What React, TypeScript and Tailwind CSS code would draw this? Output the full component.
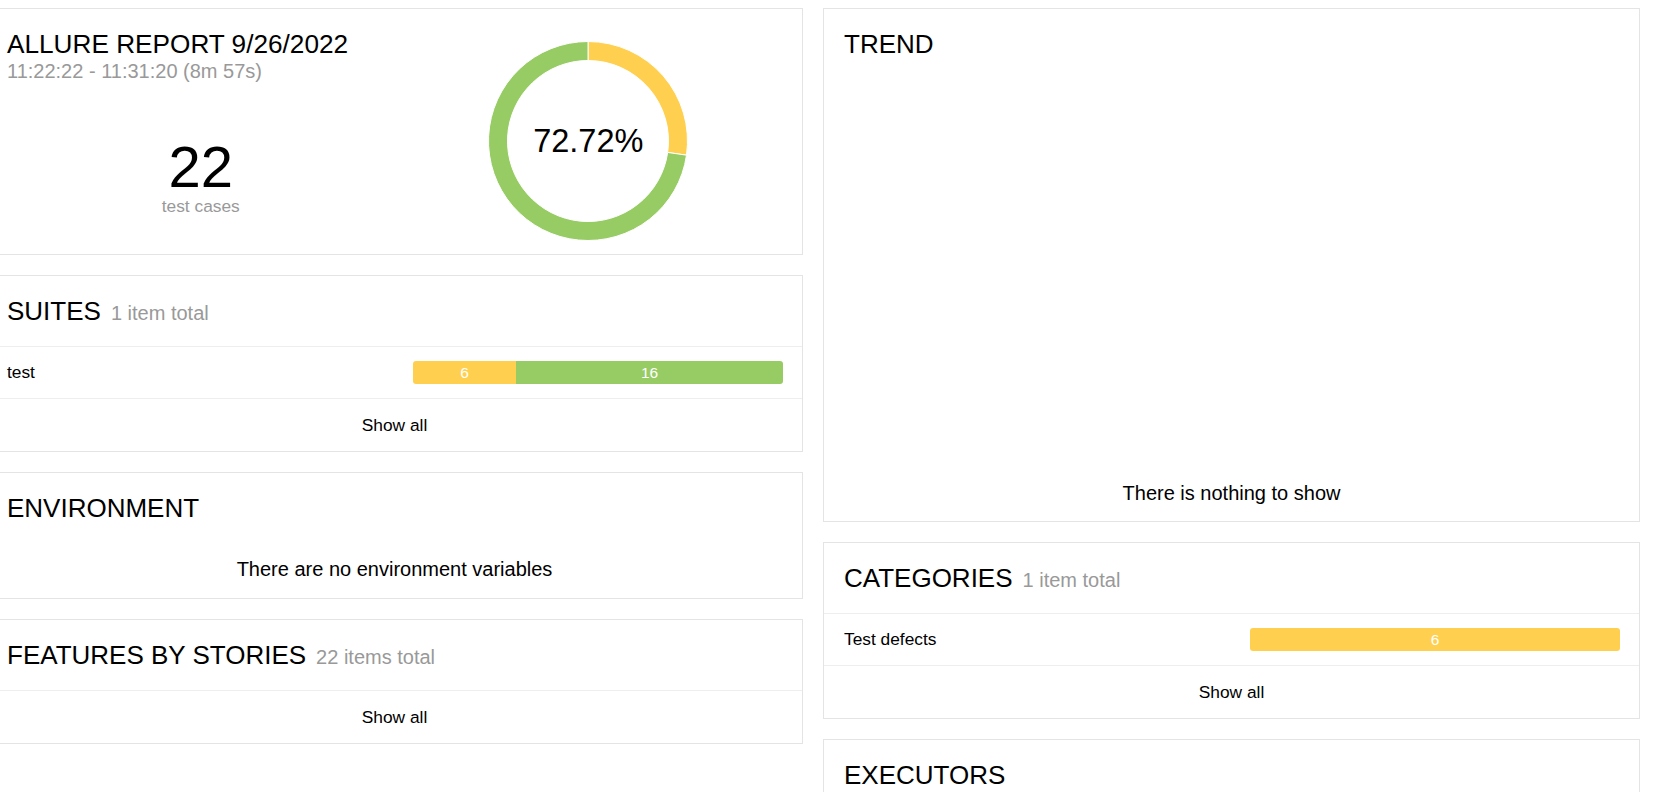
import React from "react";

const font = { fontFamily: '"Liberation Sans", Arial, sans-serif' };

function Card({ children, className = "" }: { children: React.ReactNode; className?: string }) {
  return <div className={`border border-[#e4e4e4] bg-white ${className}`}>{children}</div>;
}

function Title({ name, total }: { name: string; total?: string }) {
  return (
    <div className="h-[70px] px-[20px] py-[20px] text-[26px] leading-[30px] text-black whitespace-nowrap">
      {name}
      {total && <span className="ml-[10px] text-[20px] leading-none text-[#999]">{total}</span>}
    </div>
  );
}

function ShowAll() {
  return (
    <div className="border-t border-[#eee] py-[14px] text-center text-[17.33px] leading-[24px] text-black">
      Show all
    </div>
  );
}

function BarRow({ label, children }: { label: string; children: React.ReactNode }) {
  return (
    <div className="flex items-center border-t border-[#eee] pl-[20px] pr-[19px] py-[14px]">
      <div className="flex-1 text-[17.33px] leading-[23px] text-black">{label}</div>
      <div className="flex h-[23px] w-[370px] overflow-hidden rounded-[3px] text-center text-[15.5px] leading-[23px] text-white">
        {children}
      </div>
    </div>
  );
}

function Donut() {
  return (
    <div className="relative h-[200px] w-[200px]">
      <svg width="200" height="200" viewBox="0 0 200 200">
        <path
          d="M100,0.5 A99.5,99.5 0 0 1 198.49,114.16 L179.68,111.45 A80.5,80.5 0 0 0 100,19.5 Z"
          fill="#ffd050"
          stroke="#fff"
          strokeWidth="1"
        />
        <path
          d="M198.49,114.16 A99.5,99.5 0 1 1 100,0.5 L100,19.5 A80.5,80.5 0 1 0 179.68,111.45 Z"
          fill="#97cc64"
          stroke="#fff"
          strokeWidth="1"
        />
      </svg>
      <div className="absolute inset-0 flex items-center justify-center text-[32.5px] text-black">72.72%</div>
    </div>
  );
}

export default function App() {
  return (
    <div className="min-h-screen overflow-hidden bg-white" style={font}>
      <div className="ml-[-14px] flex gap-[20px] pt-[8px]">
        {/* left column */}
        <div className="flex w-[817px] shrink-0 flex-col gap-[20px]">
          <Card className="flex h-[247px] px-[20px]">
            <div className="flex w-1/2 flex-col pt-[20px]">
              <div className="whitespace-nowrap text-[26.2px] leading-[30px] text-black">ALLURE REPORT 9/26/2022</div>
              <div className="whitespace-nowrap text-[20px] leading-[24px] text-[#999]">11:22:22 - 11:31:20 (8m 57s)</div>
              <div className="mt-[55px] text-center text-[58px] leading-[58px] text-black">22</div>
              <div className="text-center text-[17.33px] leading-[20px] text-[#999]">test cases</div>
            </div>
            <div className="flex w-1/2 justify-center pt-[32px]">
              <Donut />
            </div>
          </Card>

          <Card>
            <Title name="SUITES" total="1 item total" />
            <BarRow label="test">
              <div className="w-[103px] bg-[#ffd050]">6</div>
              <div className="flex-1 bg-[#97cc64]">16</div>
            </BarRow>
            <ShowAll />
          </Card>

          <Card>
            <Title name="ENVIRONMENT" />
            <div className="pt-[14px] pb-[17px] text-center text-[20px] leading-[24px] text-black">
              There are no environment variables
            </div>
          </Card>

          <Card>
            <Title name="FEATURES BY STORIES" total="22 items total" />
            <ShowAll />
          </Card>
        </div>

        {/* right column */}
        <div className="flex w-[817px] shrink-0 flex-col gap-[20px]">
          <Card>
            <Title name="TREND" />
            <div className="flex h-[442px] flex-col justify-end pb-[16px] text-center text-[20px] leading-[24px] text-black">
              There is nothing to show
            </div>
          </Card>

          <Card>
            <Title name="CATEGORIES" total="1 item total" />
            <BarRow label="Test defects">
              <div className="flex-1 bg-[#ffd050]">6</div>
            </BarRow>
            <ShowAll />
          </Card>

          <Card>
            <Title name="EXECUTORS" />
            <div className="h-[80px]" />
          </Card>
        </div>
      </div>
    </div>
  );
}
